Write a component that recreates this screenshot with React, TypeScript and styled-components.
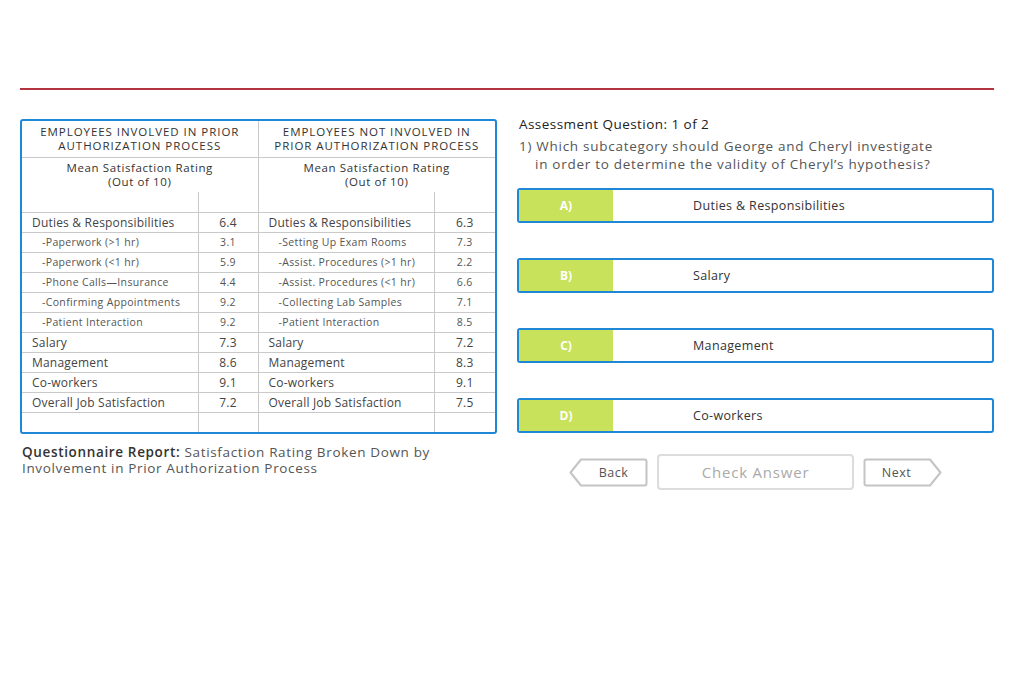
import React from "react";
import styled, { createGlobalStyle } from "styled-components";

const GlobalStyle = createGlobalStyle`
  html, body {
    margin: 0;
    padding: 0;
    background: #ffffff;
  }
  body {
    font-family: "Open Sans", "Liberation Sans", sans-serif;
    color: #444;
  }
`;

const Page = styled.div`
  width: 1014px;
  height: 698px;
  box-sizing: border-box;
  padding: 88px 20px 0 20px;
`;

const Rule = styled.div`
  height: 2px;
  background: #b3343f;
`;

const Content = styled.div`
  display: flex;
  gap: 20px;
  margin-top: 27px;
`;

const LeftCol = styled.div`
  width: 477px;
  padding-top: 2px;
`;

const RightCol = styled.div`
  width: 477px;
  display: flex;
  flex-direction: column;
`;

const TableFrame = styled.div`
  border: 2px solid #1e88d6;
  border-radius: 3px;
  overflow: hidden;
`;

const Table = styled.table`
  width: 100%;
  border-collapse: collapse;
  table-layout: fixed;
  tr:first-child > * {
    border-top: none;
  }
  tr > *:first-child {
    border-left: none;
  }
  tr > *:last-child {
    border-right: none;
  }
  tr:last-child > * {
    border-bottom: none;
  }
`;

const HeadCell = styled.th<{ $caps?: boolean }>`
  border: 1px solid #c9c9c9;
  font-weight: 400;
  font-size: 11.5px;
  letter-spacing: ${(p) => (p.$caps ? 0.95 : 0.6)}px;
  line-height: 14px;
  color: #333;
  text-align: center;
  height: ${(p) => (p.$caps ? 36 : 35)}px;
  padding: 0;
  white-space: nowrap;
  box-sizing: border-box;
`;

const Cell = styled.td<{ $sub?: boolean; $num?: boolean }>`
  border: 1px solid #c9c9c9;
  height: 20px;
  padding: 0 0 0 ${(p) => (p.$num ? 0 : p.$sub ? 20 : 10)}px;
  font-size: ${(p) => (p.$sub ? 10.5 : 12)}px;
  letter-spacing: ${(p) => (p.$sub ? 0.35 : 0.2)}px;
  color: ${(p) => (p.$sub ? "#555" : "#444")};
  text-align: ${(p) => (p.$num ? "center" : "left")};
  white-space: nowrap;
  box-sizing: border-box;
`;

const Caption = styled.p`
  margin: 10px 0 0 2px;
  font-size: 13.5px;
  letter-spacing: 0.65px;
  line-height: 16px;
  color: #555;
  b {
    font-weight: 600;
    color: #333;
  }
`;

const QTitle = styled.div`
  margin-left: 2px;
  font-size: 13.5px;
  font-weight: 500;
  letter-spacing: 0.45px;
  color: #222;
  line-height: 14px;
`;

const QText = styled.div`
  margin: 6px 0 0 2px;
  font-size: 13.5px;
  letter-spacing: 0.72px;
  line-height: 18px;
  color: #555;
  padding-left: 16px;
  text-indent: -16px;
`;

const Answers = styled.div`
  display: flex;
  flex-direction: column;
  gap: 35px;
  margin-top: 15px;
`;

const Answer = styled.div`
  display: flex;
  height: 35px;
  box-sizing: border-box;
  border: 2px solid #1e88d6;
  border-radius: 3px;
  overflow: hidden;
  cursor: pointer;
`;

const Letter = styled.div`
  width: 94px;
  background: #c9e25b;
  color: #fff;
  font-weight: 700;
  font-size: 12px;
  display: flex;
  align-items: center;
  justify-content: center;
`;

const AnswerText = styled.div`
  flex: 1;
  display: flex;
  align-items: center;
  padding-left: 80px;
  font-size: 12.5px;
  letter-spacing: 0.35px;
  color: #333;
`;

const Nav = styled.div`
  display: flex;
  justify-content: center;
  align-items: center;
  gap: 9px;
  margin-top: 21px;
`;

const ArrowButton = styled.button<{ $dir: "left" | "right" }>`
  position: relative;
  width: 79px;
  height: 29px;
  border: none;
  background: transparent;
  padding: ${(p) => (p.$dir === "left" ? "0 0 0 10px" : "0 12px 0 0")};
  font-family: inherit;
  font-size: 12.5px;
  letter-spacing: 0.5px;
  color: #555;
  cursor: pointer;
  svg {
    position: absolute;
    inset: 0;
  }
  span {
    position: relative;
  }
`;

const CheckButton = styled.button`
  width: 197px;
  height: 36px;
  box-sizing: border-box;
  border: 2px solid #dcdcdc;
  border-radius: 4px;
  background: #fff;
  font-family: inherit;
  font-size: 15px;
  letter-spacing: 0.8px;
  color: #aaa;
`;

const Arrow = ({ dir }: { dir: "left" | "right" }) => (
  <svg width="79" height="29" viewBox="0 0 79 29">
    <path
      d={
        dir === "left"
          ? "M12 1.5 H75.5 Q77.5 1.5 77.5 3.5 V25.5 Q77.5 27.5 75.5 27.5 H12 L1.5 14.5 Z"
          : "M3.5 1.5 H67 L77.5 14.5 L67 27.5 H3.5 Q1.5 27.5 1.5 25.5 V3.5 Q1.5 1.5 3.5 1.5 Z"
      }
      fill="#fff"
      stroke="#c4c4c4"
      strokeWidth="2"
      strokeLinejoin="round"
    />
  </svg>
);

type Row = { a: string; av: string; b: string; bv: string; sub?: boolean };

const rows: Row[] = [
  { a: "Duties & Responsibilities", av: "6.4", b: "Duties & Responsibilities", bv: "6.3" },
  { a: "-Paperwork (>1 hr)", av: "3.1", b: "-Setting Up Exam Rooms", bv: "7.3", sub: true },
  { a: "-Paperwork (<1 hr)", av: "5.9", b: "-Assist. Procedures (>1 hr)", bv: "2.2", sub: true },
  { a: "-Phone Calls\u2014Insurance", av: "4.4", b: "-Assist. Procedures (<1 hr)", bv: "6.6", sub: true },
  { a: "-Confirming Appointments", av: "9.2", b: "-Collecting Lab Samples", bv: "7.1", sub: true },
  { a: "-Patient Interaction", av: "9.2", b: "-Patient Interaction", bv: "8.5", sub: true },
  { a: "Salary", av: "7.3", b: "Salary", bv: "7.2" },
  { a: "Management", av: "8.6", b: "Management", bv: "8.3" },
  { a: "Co-workers", av: "9.1", b: "Co-workers", bv: "9.1" },
  { a: "Overall Job Satisfaction", av: "7.2", b: "Overall Job Satisfaction", bv: "7.5" },
];

const answers = [
  { k: "A)", t: "Duties & Responsibilities" },
  { k: "B)", t: "Salary" },
  { k: "C)", t: "Management" },
  { k: "D)", t: "Co-workers" },
];

export default function App() {
  return (
    <Page>
      <GlobalStyle />
      <Rule />
      <Content>
        <LeftCol>
          <TableFrame>
            <Table>
              <colgroup>
                <col style={{ width: 176 }} />
                <col style={{ width: 60 }} />
                <col style={{ width: 176 }} />
                <col />
              </colgroup>
              <thead>
                <tr>
                  <HeadCell colSpan={2} $caps>
                    EMPLOYEES INVOLVED IN PRIOR
                    <br />
                    AUTHORIZATION PROCESS
                  </HeadCell>
                  <HeadCell colSpan={2} $caps>
                    EMPLOYEES NOT INVOLVED IN
                    <br />
                    PRIOR AUTHORIZATION PROCESS
                  </HeadCell>
                </tr>
                <tr>
                  <HeadCell colSpan={2}>
                    Mean Satisfaction Rating
                    <br />
                    (Out of 10)
                  </HeadCell>
                  <HeadCell colSpan={2}>
                    Mean Satisfaction Rating
                    <br />
                    (Out of 10)
                  </HeadCell>
                </tr>
              </thead>
              <tbody>
                <tr>
                  <Cell />
                  <Cell $num />
                  <Cell />
                  <Cell $num />
                </tr>
                {rows.map((r, i) => (
                  <tr key={i}>
                    <Cell $sub={r.sub}>{r.a}</Cell>
                    <Cell $num $sub={r.sub}>{r.av}</Cell>
                    <Cell $sub={r.sub}>{r.b}</Cell>
                    <Cell $num $sub={r.sub}>{r.bv}</Cell>
                  </tr>
                ))}
                <tr>
                  <Cell />
                  <Cell $num />
                  <Cell />
                  <Cell $num />
                </tr>
              </tbody>
            </Table>
          </TableFrame>
          <Caption>
            <b>Questionnaire Report:</b> Satisfaction Rating Broken Down by
            <br />
            Involvement in Prior Authorization Process
          </Caption>
        </LeftCol>
        <RightCol>
          <QTitle>Assessment Question: 1 of 2</QTitle>
          <QText>
            1) Which subcategory should George and Cheryl investigate
            <br />
            in order to determine the validity of Cheryl’s hypothesis?
          </QText>
          <Answers>
            {answers.map((a) => (
              <Answer key={a.k}>
                <Letter>{a.k}</Letter>
                <AnswerText>{a.t}</AnswerText>
              </Answer>
            ))}
          </Answers>
          <Nav>
            <ArrowButton $dir="left">
              <Arrow dir="left" />
              <span>Back</span>
            </ArrowButton>
            <CheckButton>Check Answer</CheckButton>
            <ArrowButton $dir="right">
              <Arrow dir="right" />
              <span>Next</span>
            </ArrowButton>
          </Nav>
        </RightCol>
      </Content>
    </Page>
  );
}
